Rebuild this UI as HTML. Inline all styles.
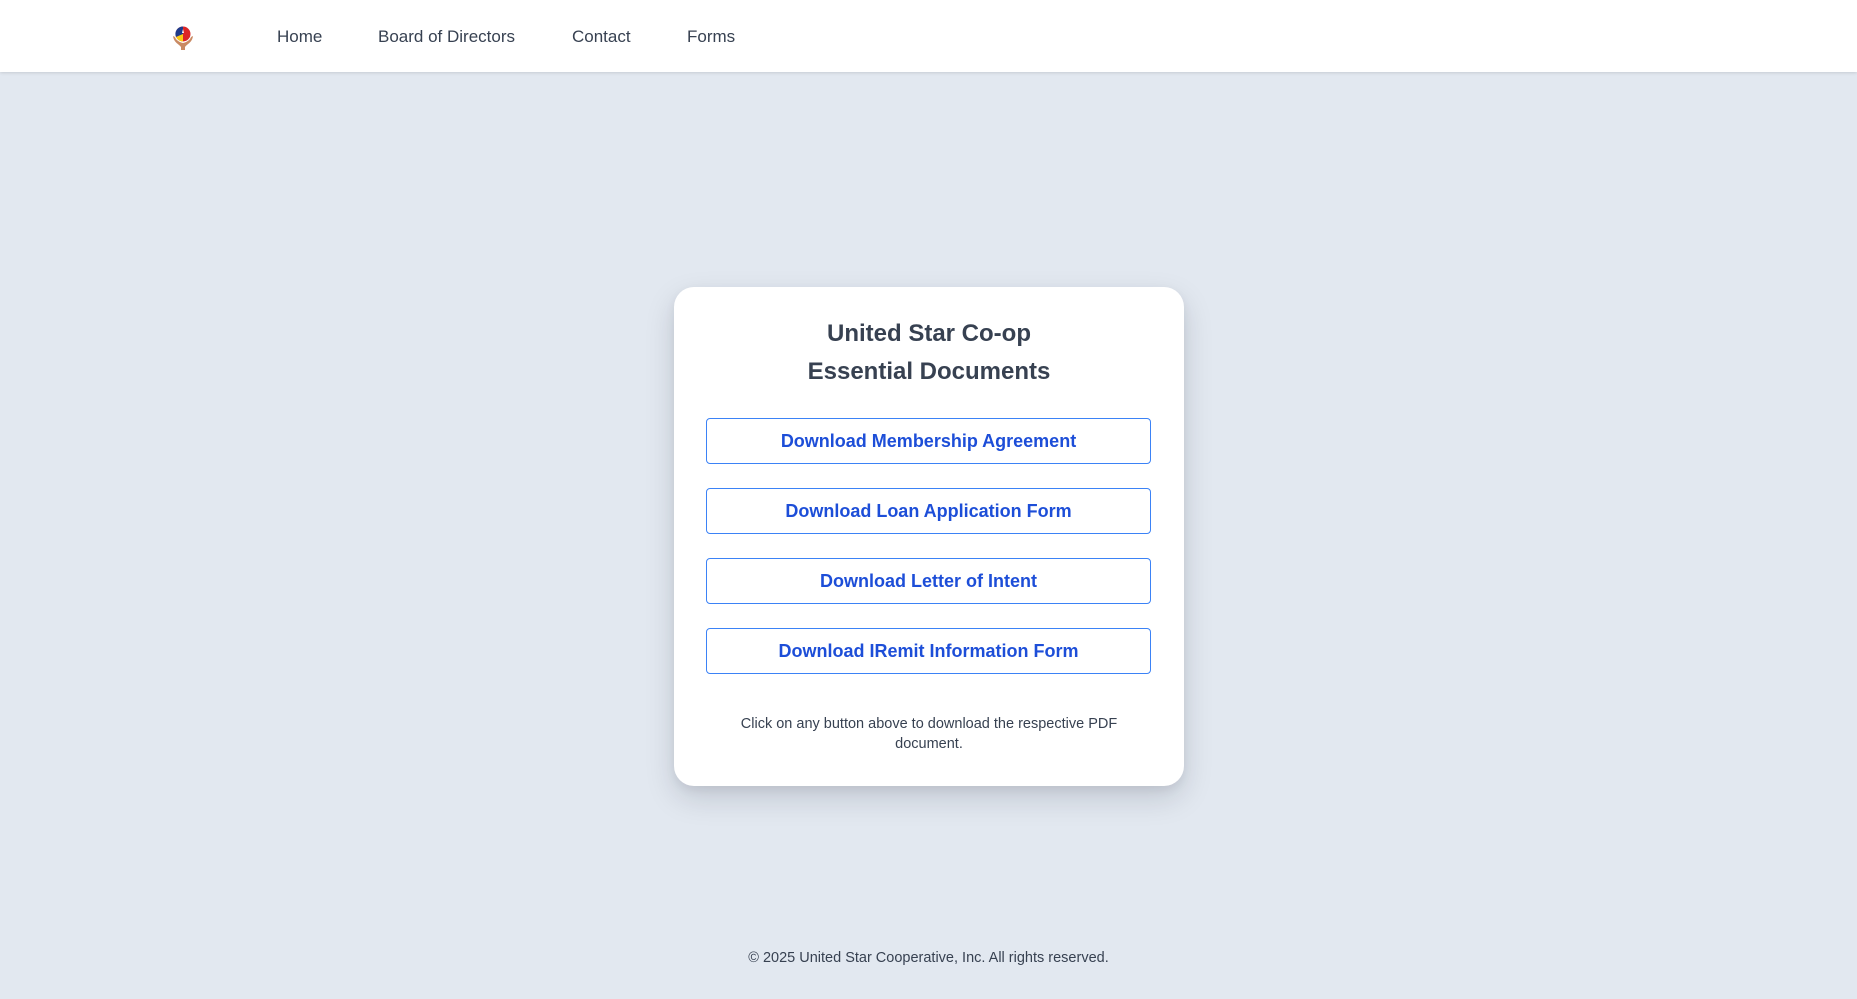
<!DOCTYPE html>
<html><head><meta charset="utf-8"><style>
*{margin:0;padding:0;box-sizing:border-box}
html,body{width:1857px;height:999px;overflow:hidden}
body{background:#e2e8f0;font-family:"Liberation Sans",Arial,sans-serif;position:relative}
nav{position:absolute;left:0;top:0;width:1857px;height:72px;background:#fff;box-shadow:0 1px 3px rgba(0,0,0,.12)}
nav a{position:absolute;top:26px;font-size:17px;color:#374151;text-decoration:none;line-height:22px}
.logo{position:absolute;left:171px;top:25px}
.card{position:absolute;left:674px;top:287px;width:510px;height:499px;background:#fff;border-radius:20px;box-shadow:0 12px 30px rgba(15,23,42,.15),0 4px 10px rgba(15,23,42,.06)}
h1{position:absolute;left:0;width:510px;text-align:center;font-size:24px;line-height:38px;color:#374151;font-weight:bold}
.btn{position:absolute;left:32px;width:445px;height:46px;border:1px solid #3b82f6;border-radius:4px;color:#1d4ed8;font-weight:bold;font-size:18px;text-align:center;line-height:44px}
.note{position:absolute;left:0;width:510px;top:427px;text-align:center;font-size:14.5px;line-height:20px;color:#374151}
footer{position:absolute;left:0;width:1857px;top:950px;text-align:center;font-size:14.5px;color:#374151}
</style></head><body>
<nav>
<svg class="logo" width="24" height="26" viewBox="0 0 24 26">
<circle cx="12" cy="9" r="7.5" fill="#dc2626"/>
<path d="M12 1.5A7.5 7.5 0 0 0 5 12L12 9Z" fill="#1e3a8a"/>
<path d="M5 12A7.5 7.5 0 0 0 12 16.5L12 9Z" fill="#facc15"/>
<path d="M12 4L13 8L11 8Z" fill="#fff"/>
<path d="M2 11C3 18 8 19 10 22L10 25L14 25L14 22C16 19 21 18 22 11L20 12C19 15 16 17 12 18C8 17 5 15 4 12Z" fill="#c98a63"/>
</svg>
<a style="left:277px">Home</a>
<a style="left:378px">Board of Directors</a>
<a style="left:572px">Contact</a>
<a style="left:687px">Forms</a>
</nav>
<div class="card">
<h1 style="top:28px">United Star Co-op<br>Essential Documents</h1>
<div class="btn" style="top:131px">Download Membership Agreement</div>
<div class="btn" style="top:201px">Download Loan Application Form</div>
<div class="btn" style="top:271px">Download Letter of Intent</div>
<div class="btn" style="top:341px">Download IRemit Information Form</div>
<div class="note">Click on any button above to download the respective PDF<br>document.</div>
</div>
<footer>© 2025 United Star Cooperative, Inc. All rights reserved.</footer>
</body></html>
